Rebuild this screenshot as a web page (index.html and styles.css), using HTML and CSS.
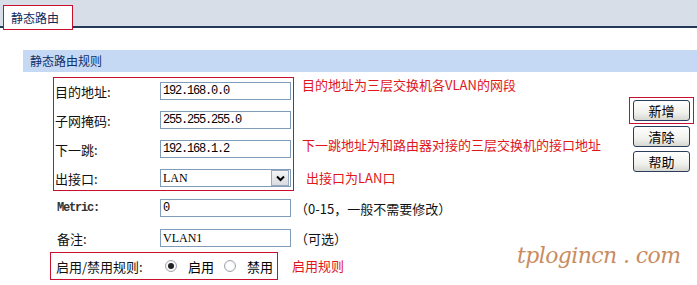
FILE: index.html
```html
<!DOCTYPE html>
<html lang="zh-CN">
<head>
  <meta charset="UTF-8">
  <title>静态路由</title>
  <link rel="stylesheet" href="styles.css">
</head>
<body>
  <div class="tabbar">
    <div class="tab">静态路由</div>
  </div>

  <div class="panel">
    <div class="panel-title">静态路由规则</div>
    <div class="panel-body">
      <div class="form">
        <div class="group">
          <div class="boxed rows">
            <div class="row">
              <span class="label">目的地址:</span>
              <input class="field" type="text" value="192.168.0.0">
            </div>
            <div class="row">
              <span class="label">子网掩码:</span>
              <input class="field" type="text" value="255.255.255.0">
            </div>
            <div class="row">
              <span class="label">下一跳:</span>
              <input class="field" type="text" value="192.168.1.2">
            </div>
            <div class="row">
              <span class="label">出接口:</span>
              <div class="select">
                <span class="select-text">LAN</span>
                <span class="arrow">
                  <svg width="9" height="7" viewBox="0 0 9 7"><path d="M1 1.5 L4.5 5 L8 1.5" fill="none" stroke="#000" stroke-width="2"/></svg>
                </span>
              </div>
            </div>
          </div>
          <div class="notes">
            <div class="note red n1">目的地址为三层交换机各VLAN的网段</div>
            <div class="note"></div>
            <div class="note red n3">下一跳地址为和路由器对接的三层交换机的接口地址</div>
            <div class="note red n4">出接口为LAN口</div>
          </div>
        </div>

        <div class="row plain first">
          <span class="label mono">Metric:</span>
          <input class="field" type="text" value="0">
          <span class="hint">（0-15，一般不需要修改）</span>
        </div>
        <div class="row plain">
          <span class="label">备注:</span>
          <input class="field serif" type="text" value="VLAN1">
          <span class="hint">（可选）</span>
        </div>

        <div class="group last">
          <div class="boxed radios">
            <span class="label">启用/禁用规则:</span>
            <span class="radio checked"></span><span class="radio-text">启用</span>
            <span class="radio"></span><span class="radio-text">禁用</span>
          </div>
          <span class="note red">启用规则</span>
        </div>
      </div>

      <div class="buttons">
        <div class="btn-box"><button class="btn">新增</button></div>
        <button class="btn second">清除</button>
        <button class="btn third">帮助</button>
      </div>
    </div>
  </div>

  <div class="watermark">tplogincn . com</div>
</body>
</html>
```

FILE: styles.css
```css
body {
  margin: 0;
  background-color: #fff;
  font-family: "Noto Sans CJK SC", "Liberation Sans", sans-serif;
  font-size: 13px;
  color: #000;
  position: relative;
  width: 697px;
  height: 285px;
  overflow: hidden;
}

.tabbar {
  display: flex;
  align-items: flex-end;
  height: 26px;
  padding-left: 3px;
  background-color: #d7dee8;
  border-bottom: 2px solid #24395a;
}

.tab {
  position: relative;
  height: 25px;
  width: 70px;
  margin-bottom: -4px;
  padding-left: 7px;
  box-sizing: border-box;
  border: 1px solid #c8102e;
  background-color: #fff;
  color: #102a5c;
  font-size: 12px;
  line-height: 24px;
}

.panel {
  margin-top: 22px;
  margin-left: 23px;
}

.panel-title {
  height: 22px;
  line-height: 22px;
  padding-left: 7px;
  background-color: #c6d9f4;
  color: #112f66;
  font-size: 12px;
}

.panel-body {
  display: flex;
}

.form {
  padding-top: 5px;
  margin-left: 30px;
}

.group {
  display: flex;
}

.boxed {
  border: 1px solid #c8102e;
}

.rows {
  display: flex;
  flex-direction: column;
  gap: 11px;
  padding: 4px 2px 3px 1px;
}

.row {
  display: flex;
  align-items: center;
  height: 18px;
}

.label {
  width: 105px;
  flex-shrink: 0;
  color: #111;
}

.label.mono {
  font-family: "Liberation Mono", monospace;
  font-size: 12px;
  font-weight: bold;
  letter-spacing: -1.2px;
  width: 103px;
  color: #333;
}

.field {
  width: 131px;
  height: 18px;
  box-sizing: border-box;
  margin: 0;
  padding: 0 2px;
  border: 1px solid #7f9db9;
  font-family: "Liberation Mono", monospace;
  font-size: 12px;
  letter-spacing: -1.2px;
  color: #000;
  outline: none;
}

.field.serif {
  font-family: "Liberation Serif", serif;
  letter-spacing: 0;
  font-size: 12px;
}

.select {
  display: flex;
  align-items: center;
  justify-content: space-between;
  width: 131px;
  height: 18px;
  box-sizing: border-box;
  border: 1px solid #7f9db9;
  padding-left: 2px;
}

.select-text {
  font-family: "Liberation Serif", serif;
  font-size: 12px;
}

.arrow {
  display: flex;
  align-items: center;
  justify-content: center;
  width: 16px;
  height: 14px;
  margin-right: 1px;
  border: 1px solid #9aa8bb;
  background: linear-gradient(#f4f4f4, #d9dbe0);
}

.notes {
  display: flex;
  flex-direction: column;
  gap: 11px;
  padding-top: 5px;
  margin-left: 8px;
}

.note {
  height: 18px;
  line-height: 18px;
  white-space: nowrap;
}

.n1 {
  margin-top: -6px;
  margin-bottom: 6px;
}

.n3 {
  margin-top: -4px;
  margin-bottom: 4px;
}

.n4 {
  margin-left: 4px;
}

.red {
  color: #e0161b;
}

.row.plain {
  padding-left: 4px;
  margin-top: 12px;
}

.row.plain.first {
  margin-top: 8px;
}

.row.plain .label {
  width: 103px;
}

.hint {
  margin-left: 4px;
  white-space: nowrap;
  color: #111;
}

.group.last {
  margin-top: 5px;
  margin-left: -3px;
  align-items: center;
}

.radios {
  display: flex;
  align-items: center;
  height: 26px;
  padding: 0 4px 0 5px;
}

.radios .label {
  width: 104px;
}

.radio {
  width: 12px;
  height: 12px;
  box-sizing: border-box;
  margin-left: 5px;
  border: 1px solid #a2a6ad;
  border-radius: 50%;
  background: radial-gradient(circle, #fff 40%, #e4e6ea 100%);
  display: flex;
  align-items: center;
  justify-content: center;
}

.radio.checked::after {
  content: "";
  width: 6px;
  height: 6px;
  border-radius: 50%;
  background-color: #222;
}

.radio-text {
  margin-left: 11px;
  margin-right: 5px;
}

.radio-text:last-child {
  margin-right: 0;
}

.group.last .note {
  margin-left: 14px;
}

.buttons {
  display: flex;
  flex-direction: column;
  align-items: flex-start;
  margin-left: auto;
  margin-right: 3px;
  margin-top: 25px;
}

.btn-box {
  border: 1px solid #c8102e;
  padding: 2px 3px;
}

.btn {
  width: 57px;
  height: 21px;
  margin: 0;
  padding: 0;
  border: 1px solid #2b3c5c;
  border-radius: 3px;
  background: linear-gradient(#ffffff, #f1f1ee 60%, #d8d8d2);
  font-family: "Noto Sans CJK SC", sans-serif;
  font-size: 13px;
  line-height: 19px;
  color: #000;
}

.btn.second {
  margin-top: 2px;
  margin-left: 4px;
}

.btn.third {
  margin-top: 4px;
  margin-left: 4px;
}

.watermark {
  position: absolute;
  left: 517px;
  top: 243px;
  white-space: nowrap;
  line-height: 1.2;
  font-family: "DejaVu Serif", serif;
  font-style: italic;
  font-size: 22px;
  letter-spacing: -0.6px;
  color: #c98c60;
}
```
